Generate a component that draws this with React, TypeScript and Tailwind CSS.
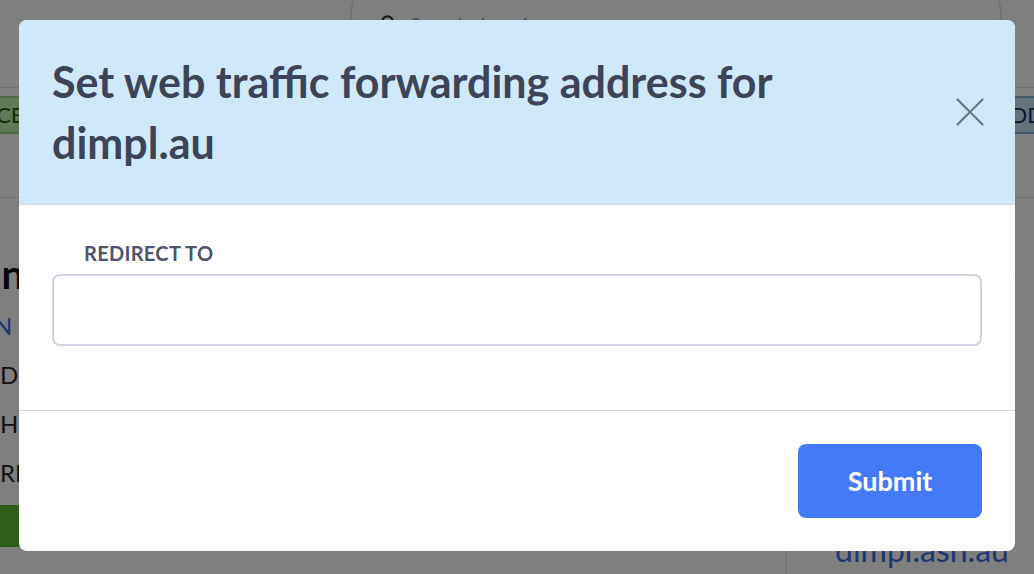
import { X } from "lucide-react";

/* Background page (dimmed behind the modal) */
function BackgroundPage() {
  return (
    <div className="flex h-full w-full flex-col bg-white">
      {/* search bar */}
      <div className="relative h-[88px] border-b border-[#dcdcdc]">
        <div className="absolute left-[350px] top-[-30px] flex h-[90px] w-[652px] items-start rounded-full border-2 border-[#e6e6e6] px-7 pt-[42px]">
          <svg width="18" height="18" viewBox="0 0 24 24" fill="none" stroke="#333" strokeWidth="3">
            <circle cx="10" cy="10" r="7" />
          </svg>
          <span className="ml-3 text-[20px] leading-[20px] text-[#999]">Search domains</span>
        </div>
      </div>
      {/* badges row */}
      <div className="flex h-[110px] items-start justify-between border-b border-[#dcdcdc] pt-[8px]">
        <span className="ml-[-20px] rounded-[3px] border-2 border-[#9ed48c] bg-[#c0f0b0] px-2 py-[4px] text-[22px] leading-[26px] text-[#1f5a10]">
          ICE
        </span>
        <span className="mr-[-20px] rounded-[3px] border-2 border-[#7fb0d8] bg-[#c8e4f8] px-2 py-[4px] text-[22px] leading-[26px] text-[#123060]">
          ADD
        </span>
      </div>
      {/* columns */}
      <div className="flex flex-1">
        <div className="flex w-[787px] flex-col border-r-2 border-[#eeeeee] pt-[52px]">
          <span className="ml-[-10px] text-[40px] font-bold leading-[48px] text-[#111]">In</span>
          <span className="ml-[-6px] mt-[12px] text-[24px] leading-[32px] text-[#3a6ee0]">N</span>
          <span className="mt-[17px] text-[24px] leading-[32px] text-[#222]">Di</span>
          <span className="mt-[17px] text-[24px] leading-[32px] text-[#222]">H.</span>
          <span className="mt-[17px] text-[24px] leading-[32px] text-[#222]">RE</span>
          <span className="ml-[-20px] mt-[16px] h-[42px] w-[44px] rounded-[6px] bg-[#5cba34]" />
        </div>
        <div className="flex flex-1 flex-col pl-[48px] pt-[52px]">
          <span className="ml-[150px] text-[40px] font-bold leading-[48px] text-[#111]">(e</span>
          <span className="ml-[150px] mt-[12px] text-[24px] leading-[32px] text-[#3a6ee0]">au</span>
          <span className="mt-[192px] whitespace-nowrap text-[32px] leading-[32px] text-[#3a6ee0]">dimpl.asn.au</span>
        </div>
      </div>
    </div>
  );
}

export default function App() {
  return (
    <div
      className="relative h-[574px] w-[1034px] overflow-hidden"
      style={{ fontFamily: "Lato, 'Noto Sans', sans-serif" }}
    >
      <BackgroundPage />

      {/* overlay */}
      <div className="absolute inset-0 flex items-start justify-center bg-black/50 pt-[20px]">
        <div className="flex w-[996px] flex-col overflow-hidden rounded-[8px] bg-white">
          {/* header */}
          <div className="flex h-[185px] items-center justify-between border-b border-[#d3d6e2] bg-[#cfe9fb] pl-[33px] pr-[20px]">
            <h2 className="max-w-[860px] text-[43px] font-bold leading-[61px] text-[#3d4458]">
              Set web traffic forwarding address for dimpl.au
            </h2>
            <button className="text-[#6c7a86]">
              <X size={50} strokeWidth={1.1} />
            </button>
          </div>

          {/* body */}
          <div className="flex flex-col border-b border-[#d3d6e2] px-[33px] pb-[64px] pt-[36px]">
            <label className="ml-[32px] text-[20px] font-bold uppercase leading-[24px] tracking-[0.3px] text-[#4d546b]">
              Redirect to
            </label>
            <input
              type="text"
              className="mt-[9px] h-[72px] w-full rounded-[8px] border-2 border-[#d0d3e2] px-4 text-[18px] outline-none"
            />
          </div>

          {/* footer */}
          <div className="flex justify-end px-[33px] py-[33px]">
            <button className="h-[74px] w-[184px] rounded-[8px] bg-[#4479f7] text-[27px] font-bold text-white">
              Submit
            </button>
          </div>
        </div>
      </div>
    </div>
  );
}
